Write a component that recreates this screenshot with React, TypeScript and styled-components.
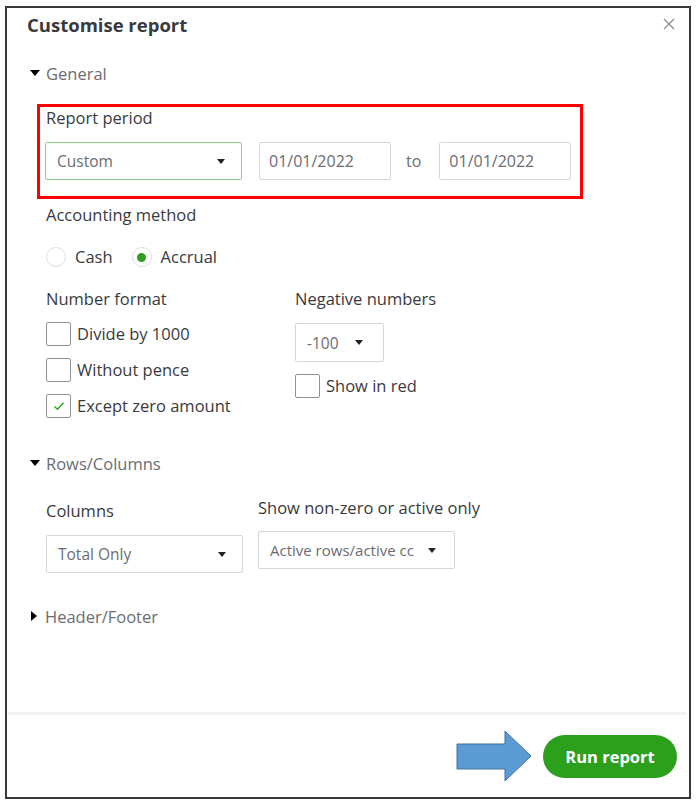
import React from 'react'
import styled, { createGlobalStyle } from 'styled-components'

const GlobalStyle = createGlobalStyle`
  body {
    margin: 0;
    background: #fff;
    font-family: 'Open Sans', 'Liberation Sans', sans-serif;
    color: #393a3d;
  }
`

const Frame = styled.div`
  margin: 6px 0 0 5px;
  width: 686px;
  height: 793px;
  box-sizing: border-box;
  border: 2px solid #3a3a3a;
  display: flex;
  flex-direction: column;
`

const Header = styled.div`
  height: 32px;
  display: flex;
  align-items: center;
  justify-content: space-between;
  padding: 0 14px 0 20px;
`

const Title = styled.div`
  font-size: 18.5px;
  font-weight: 700;
  color: #393a3d;
`

const Body = styled.div`
  flex: 1;
  padding-left: 23px;
`

const Toggle = styled.div<{ $top: number }>`
  margin-top: ${p => p.$top}px;
  height: 20px;
  display: flex;
  align-items: center;
  gap: 5px;
  font-size: 16.5px;
  color: #6b6c72;
`

const Caret = styled.span<{ $open?: boolean }>`
  width: 0;
  height: 0;
  ${p => p.$open
    ? `border-left: 5px solid transparent;
       border-right: 5px solid transparent;
       border-top: 6px solid #000;
       margin-right: 1px;`
    : `border-top: 5px solid transparent;
       border-bottom: 5px solid transparent;
       border-left: 6px solid #000;
       margin-left: 1px; margin-right: 3px;`}
`

const Highlight = styled.div`
  margin: 21px 0 0 7px;
  width: 546px;
  box-sizing: border-box;
  border: 3px solid #f00;
  padding: 1px 0 16px 5px;
`

const Label = styled.div<{ $top?: number }>`
  margin-top: ${p => p.$top ?? 0}px;
  height: 20px;
  line-height: 20px;
  font-size: 16.5px;
  color: #393a3d;
  white-space: nowrap;
`

const Row = styled.div<{ $top?: number }>`
  margin-top: ${p => p.$top ?? 0}px;
  display: flex;
  align-items: center;
`

const Group = styled.div`
  padding-left: 16px;
`

const SelectBox = styled.div<{ $w: number; $h?: number; $green?: boolean }>`
  width: ${p => p.$w}px;
  height: ${p => p.$h ?? 38}px;
  box-sizing: border-box;
  border: 1px solid ${p => (p.$green ? '#8fd18b' : '#d4d7dc')};
  border-radius: 2px;
  display: flex;
  align-items: center;
  justify-content: space-between;
  gap: 6px;
  padding: 0 16px 0 11px;
  font-size: 15.5px;
  color: #6b6c72;
  white-space: nowrap;
`

const DownCaret = styled.i`
  flex: none;
  width: 0;
  height: 0;
  border-left: 4.5px solid transparent;
  border-right: 4.5px solid transparent;
  border-top: 5px solid #222;
`

const DateInput = styled.div`
  width: 132px;
  height: 38px;
  box-sizing: border-box;
  border: 1px solid #d4d7dc;
  border-radius: 2px;
  display: flex;
  align-items: center;
  padding-left: 9px;
  font-size: 16px;
  color: #6b6c72;
`

const To = styled.span`
  margin: 0 18px 0 15px;
  font-size: 16px;
  color: #6b6c72;
`

const RadioItem = styled.label`
  display: flex;
  align-items: center;
  gap: 9px;
  margin-right: 19px;
  line-height: 20px;
  font-size: 16.5px;
  color: #393a3d;
`

const Radio = styled.span<{ $on?: boolean }>`
  width: 20px;
  height: 20px;
  box-sizing: border-box;
  border-radius: 50%;
  border: 1px solid #dcdee2;
  display: flex;
  align-items: center;
  justify-content: center;
  &::after {
    content: '';
    width: 9px;
    height: 9px;
    border-radius: 50%;
    background: ${p => (p.$on ? '#2ca01c' : 'transparent')};
  }
`

const Columns = styled.div<{ $left: number; $top: number }>`
  margin-top: ${p => p.$top}px;
  display: grid;
  grid-template-columns: ${p => p.$left}px auto;
  align-items: start;
`

const Stack = styled.div<{ $top?: number }>`
  margin-top: ${p => p.$top ?? 0}px;
  display: flex;
  flex-direction: column;
  align-items: flex-start;
`

const CheckItem = styled.label<{ $top?: number }>`
  margin-top: ${p => p.$top ?? 0}px;
  display: flex;
  align-items: center;
  gap: 6px;
  line-height: 20px;
  font-size: 16.5px;
  color: #393a3d;
`

const Box = styled.span`
  width: 25px;
  height: 24px;
  box-sizing: border-box;
  border: 1px solid #8d9096;
  border-radius: 2px;
  display: flex;
  align-items: center;
  justify-content: center;
`

const Footer = styled.div`
  margin: 0 2px 0 1px;
  height: 85px;
  box-sizing: border-box;
  border-top: 3px solid #f2f3f6;
  display: flex;
  align-items: center;
  justify-content: flex-end;
  gap: 11px;
  padding: 0 10px 0 0;
`

const RunButton = styled.button`
  width: 134px;
  height: 43px;
  border: none;
  border-radius: 22px;
  background: #2ca01c;
  color: #fff;
  font-family: inherit;
  font-size: 16.5px;
  font-weight: 700;
`

const Check = () => (
  <svg width="12" height="10" viewBox="0 0 12 10">
    <path d="M1.5 5.5 L4.5 8.2 L10.5 1.8" fill="none" stroke="#2ca01c" strokeWidth="1.4" />
  </svg>
)

const Close = () => (
  <svg width="12" height="12" viewBox="0 0 12 12">
    <path d="M1 1 L11 11 M11 1 L1 11" stroke="#8d9096" strokeWidth="1.4" />
  </svg>
)

const Arrow = () => (
  <svg width="76" height="52" viewBox="0 0 76 52">
    <path d="M1 14 H49 V1 L75 26 L49 51 V39 H1 Z" fill="#5b9bd5" stroke="#41719c" strokeWidth="1" />
  </svg>
)

const App: React.FC = () => (
  <>
    <GlobalStyle />
    <Frame>
      <Header>
        <Title>Customise report</Title>
        <Close />
      </Header>
      <Body>
        <Toggle $top={23}>
          <Caret $open />
          General
        </Toggle>
        <Highlight>
          <Label style={{ paddingLeft: 1 }}>Report period</Label>
          <Row $top={14}>
            <SelectBox $w={197} $green>
              Custom
              <DownCaret />
            </SelectBox>
            <DateInput style={{ marginLeft: 17 }}>01/01/2022</DateInput>
            <To>to</To>
            <DateInput>01/01/2022</DateInput>
          </Row>
        </Highlight>
        <Group>
          <Label $top={6}>Accounting method</Label>
          <Row $top={22}>
            <RadioItem>
              <Radio />
              Cash
            </RadioItem>
            <RadioItem>
              <Radio $on />
              Accrual
            </RadioItem>
          </Row>
          <Columns $left={249} $top={22}>
            <Stack>
              <Label>Number format</Label>
              <CheckItem $top={13}>
                <Box />
                Divide by 1000
              </CheckItem>
              <CheckItem $top={12}>
                <Box />
                Without pence
              </CheckItem>
              <CheckItem $top={12}>
                <Box>
                  <Check />
                </Box>
                Except zero amount
              </CheckItem>
            </Stack>
            <Stack>
              <Label>Negative numbers</Label>
              <SelectBox $w={89} $h={39} style={{ marginTop: 14, paddingRight: 20 }}>
                -100
                <DownCaret />
              </SelectBox>
              <CheckItem $top={12}>
                <Box />
                Show in red
              </CheckItem>
            </Stack>
          </Columns>
        </Group>
        <Toggle $top={35}>
          <Caret $open />
          Rows/Columns
        </Toggle>
        <Group>
          <Columns $left={212} $top={18}>
            <Stack $top={10}>
              <Label>Columns</Label>
              <SelectBox $w={197} style={{ marginTop: 14 }}>
                Total Only
                <DownCaret />
              </SelectBox>
            </Stack>
            <Stack $top={7}>
              <Label>Show non-zero or active only</Label>
              <SelectBox $w={197} style={{ marginTop: 13, paddingRight: 18, fontSize: 15 }}>
                Active rows/active cc
                <DownCaret />
              </SelectBox>
            </Stack>
          </Columns>
        </Group>
        <Toggle $top={33}>
          <Caret />
          Header/Footer
        </Toggle>
      </Body>
      <Footer>
        <Arrow />
        <RunButton>Run report</RunButton>
      </Footer>
    </Frame>
  </>
)

export default App
